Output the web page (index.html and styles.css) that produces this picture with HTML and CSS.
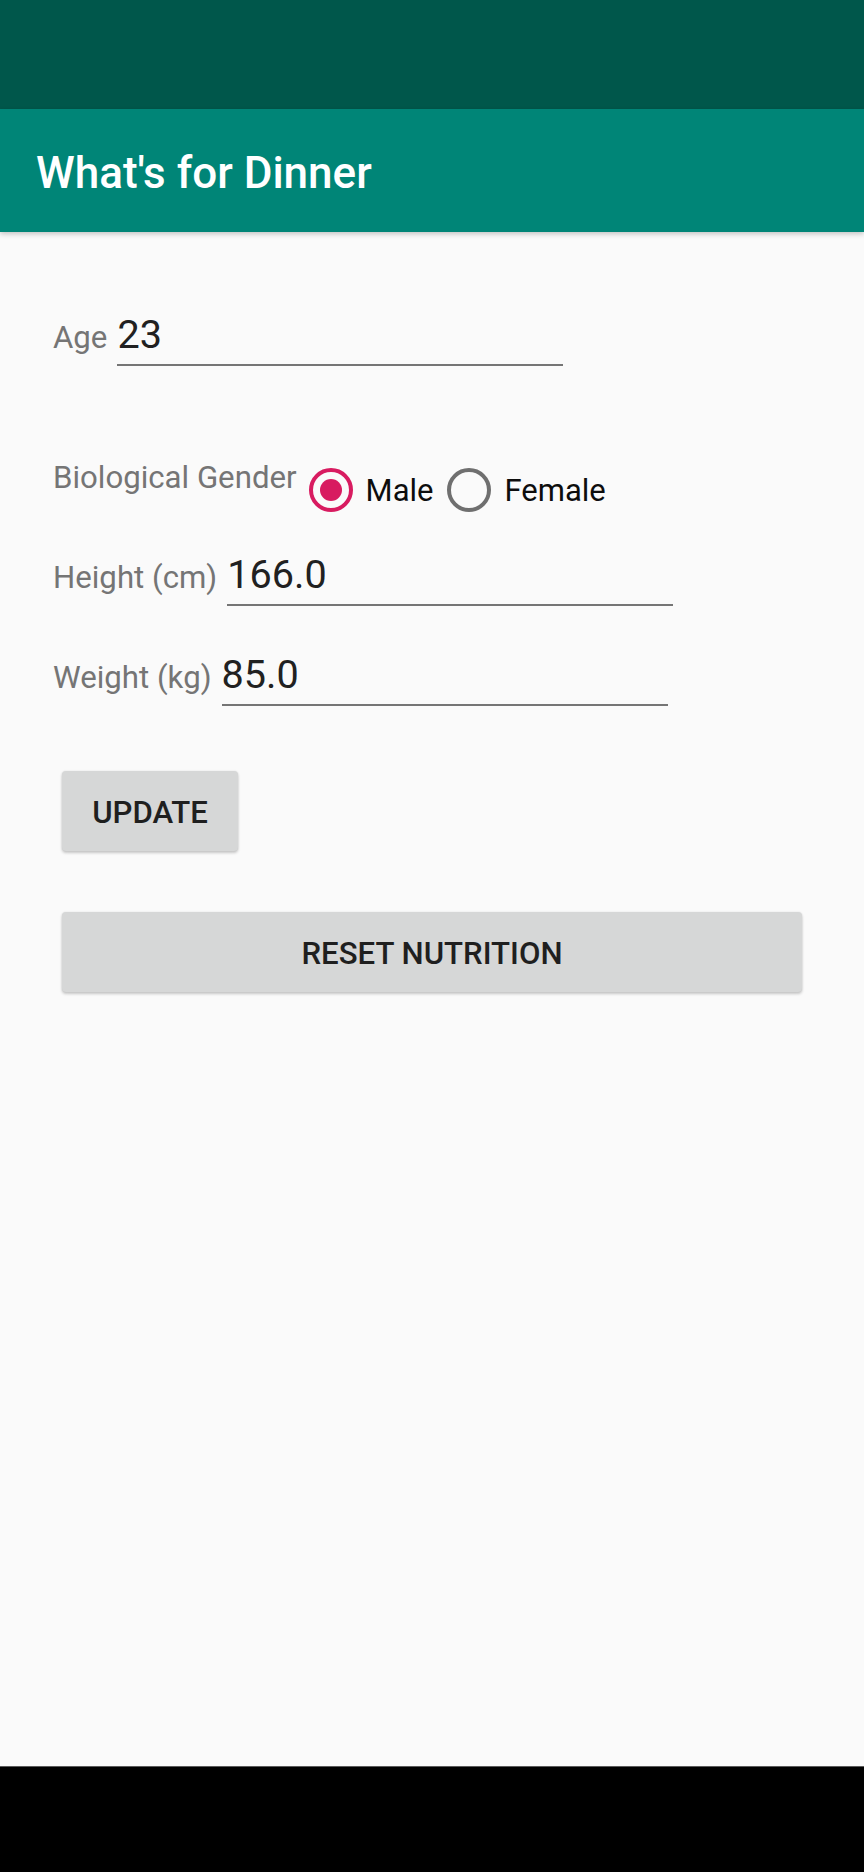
FILE: index.html
```html
<!DOCTYPE html>
<html lang="en">
<head>
<meta charset="utf-8">
<title>What's for Dinner</title>
<link rel="stylesheet" href="styles.css">
</head>
<body>
<div class="screen">
  <div class="status-bar"></div>
  <header class="app-bar">
    <h1 class="app-title">What's for Dinner</h1>
  </header>
  <main class="content">
    <div class="field-row row-age">
      <span class="label">Age</span>
      <div class="field">23</div>
    </div>

    <div class="gender-row">
      <span class="label gender-label">Biological Gender</span>
      <div class="radio-group">
        <div class="radio-item">
          <span class="radio checked"><span class="dot"></span></span>
          <span class="radio-text">Male</span>
        </div>
        <div class="radio-item">
          <span class="radio"></span>
          <span class="radio-text">Female</span>
        </div>
      </div>
    </div>

    <div class="field-row row-height">
      <span class="label">Height (cm)</span>
      <div class="field">166.0</div>
    </div>

    <div class="field-row row-weight">
      <span class="label">Weight (kg)</span>
      <div class="field">85.0</div>
    </div>

    <button class="btn btn-update">UPDATE</button>
    <button class="btn btn-reset">RESET NUTRITION</button>
  </main>
  <div class="nav-bar"></div>
</div>
</body>
</html>
```

FILE: styles.css
```css
* {
  box-sizing: border-box;
}

html, body {
  margin: 0;
  padding: 0;
  background: #fafafa;
}

body {
  font-family: Roboto, "Noto Sans", "Liberation Sans", sans-serif;
}

.screen {
  width: 864px;
  height: 1872px;
  display: flex;
  flex-direction: column;
  background: #fafafa;
}

.status-bar {
  height: 109px;
  background: #00574b;
  flex: none;
}

.app-bar {
  height: 123px;
  flex: none;
  background: #008577;
  padding: 42px 0 0 36px;
  box-shadow: 0 2px 5px rgba(0, 0, 0, 0.22);
  position: relative;
  z-index: 1;
}

.app-title {
  margin: 0;
  font-size: 44px;
  line-height: 44px;
  font-weight: 500;
  color: #ffffff;
}

.content {
  flex: 1;
  padding: 81px 53px 0 53px;
  display: flex;
  flex-direction: column;
  align-items: flex-start;
}

.label {
  font-size: 31.2px;
  line-height: 36px;
  color: #757575;
  white-space: nowrap;
}

.field-row {
  display: flex;
  align-items: baseline;
  gap: 10px;
}

.field {
  width: 446px;
  font-size: 39.6px;
  line-height: 44px;
  color: #212121;
  padding-bottom: 7px;
  border-bottom: 2px solid #757575;
}

.gender-row {
  display: flex;
  align-items: flex-start;
  margin-top: 89px;
}

.gender-label {
  margin-top: 5px;
}

.radio-group {
  display: flex;
  align-items: center;
  margin-left: 12px;
}

.radio-item {
  display: flex;
  align-items: center;
  height: 70px;
  margin-right: 14px;
}

.radio {
  width: 44px;
  height: 44px;
  border-radius: 50%;
  border: 4.4px solid #6f6f6f;
  display: flex;
  align-items: center;
  justify-content: center;
  flex: none;
}

.radio.checked {
  border-color: #d81b60;
}

.dot {
  width: 22px;
  height: 22px;
  border-radius: 50%;
  background: #d81b60;
}

.radio-text {
  margin-left: 13px;
  font-size: 31px;
  line-height: 36px;
  padding-top: 2px;
  color: #0d0d0d;
}

.row-height {
  margin-top: 28px;
}

.row-weight {
  margin-top: 47px;
}

.btn {
  font-family: Roboto, "Noto Sans", "Liberation Sans", sans-serif;
  font-size: 31.2px;
  font-weight: 500;
  color: #1f1f1f;
  background: #d6d7d7;
  border: none;
  border-radius: 4px;
  height: 80px;
  padding: 3px 0 0 0;
  margin-left: 9px;
  box-shadow: 0 2px 3px rgba(0, 0, 0, 0.2), 0 0 2px rgba(0, 0, 0, 0.1);
  display: flex;
  align-items: center;
  justify-content: center;
}

.btn-update {
  width: 176px;
  margin-top: 65px;
}

.btn-reset {
  width: 740px;
  margin-top: 61px;
}

.nav-bar {
  height: 106px;
  flex: none;
  background: #000000;
  border-top: 1px solid #5a5a5a;
}
```
